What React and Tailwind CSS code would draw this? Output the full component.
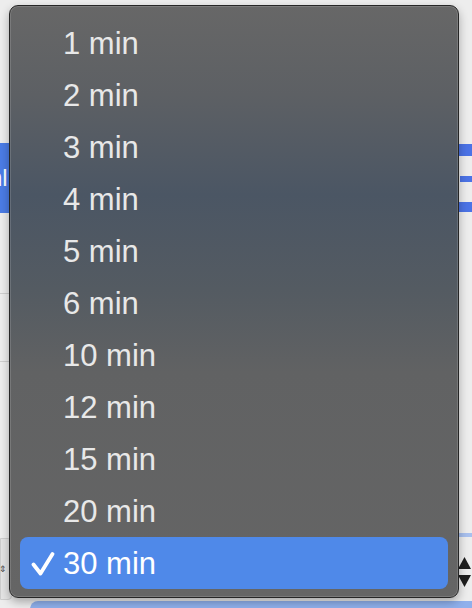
import React from "react";

const items = ["1 min", "2 min", "3 min", "4 min", "5 min", "6 min", "10 min", "12 min", "15 min", "20 min", "30 min"];

export default function App() {
  return (
    <div className="relative w-[472px] h-[608px] overflow-hidden bg-[#ededed]" style={{ fontFamily: '"Liberation Sans", Arial, sans-serif' }}>
      {/* background content */}
      <div className="flex flex-col w-full">
        <div className="h-[143px]" />
        <div className="flex h-[70px] justify-between">
          <div className="w-[10px] h-full bg-[#4b7ce6] flex items-center overflow-hidden">
            <span className="text-white text-[24px] leading-none -ml-[11px]">nl</span>
          </div>
          <div className="flex flex-col w-[14px]">
            <div className="h-[1px]" />
            <div className="h-[12px] bg-[#4b73e6]" />
            <div className="h-[20px]" />
            <div className="h-[6px] ml-[2px] bg-[#4b73e6]" />
            <div className="h-[20px]" />
            <div className="h-[10px] bg-[#4b73e6]" />
          </div>
        </div>
        <div className="h-[80px]" />
        <div className="h-[1px] w-[12px] bg-[#cfcfcf]" />
        <div className="h-[67px]" />
        <div className="h-[1px] w-[12px] bg-[#cfcfcf]" />
        <div className="h-[171px]" />
        <div className="flex justify-between h-[68px]">
          <div className="flex flex-col w-[12px] pt-[5px]">
            <div className="h-[62px] bg-[#e4e4e4] border border-[#cdcdcd] rounded-r-[4px] flex items-center text-[9px] text-[#444] leading-none">
              <span className="-ml-[2px]">⇕</span>
            </div>
          </div>
          <div className="flex flex-col w-[14px]">
            <div className="h-[4px] bg-[#a8c0ee]" />
            <div className="h-[18px]" />
            <div className="flex flex-col items-start">
              <svg width="14" height="36" viewBox="0 0 14 36">
                <path d="M0 14 L6.5 2 L13 14 Z" fill="#1e1e1e" />
                <path d="M0 20 L6.5 32 L13 20 Z" fill="#1e1e1e" />
              </svg>
            </div>
          </div>
        </div>
        <div className="h-[8px] ml-[30px] bg-[#8fb0ec] rounded-tl-[10px]" />
      </div>

      {/* popup menu */}
      <div className="absolute left-[9px] top-[5px] w-[450px] h-[593px] rounded-[9px] border border-[#262626] shadow-[0_4px_10px_rgba(0,0,0,0.3)] overflow-hidden bg-[linear-gradient(180deg,#676767_0%,#5d6064_15%,#4b5664_32%,#545b62_48%,#616263_62%,#656565_100%)]">
        <div className="h-full w-full rounded-[8px] shadow-[inset_0_0_0_1px_rgba(255,255,255,0.14)] flex flex-col pt-[11px] px-[10px]">
          {items.map((t) => {
            const sel = t === "30 min";
            return (
              <div
                key={t}
                className={
                  sel
                    ? "h-[52px] flex items-center rounded-[8px] bg-[#4f89e9] text-white"
                    : "h-[52px] flex items-center text-[#e8e8e8]"
                }
              >
                <div className="w-[43px] flex justify-end pr-[8px]">
                  {sel && (
                    <svg width="24" height="25" viewBox="0 0 24 25">
                      <path d="M2.5 13.5 L9.5 22.5 L21.5 3" fill="none" stroke="#ffffff" strokeWidth="3.8" strokeLinecap="round" strokeLinejoin="round" />
                    </svg>
                  )}
                </div>
                <span className="text-[31px] leading-none">{t}</span>
              </div>
            );
          })}
        </div>
      </div>
    </div>
  );
}
